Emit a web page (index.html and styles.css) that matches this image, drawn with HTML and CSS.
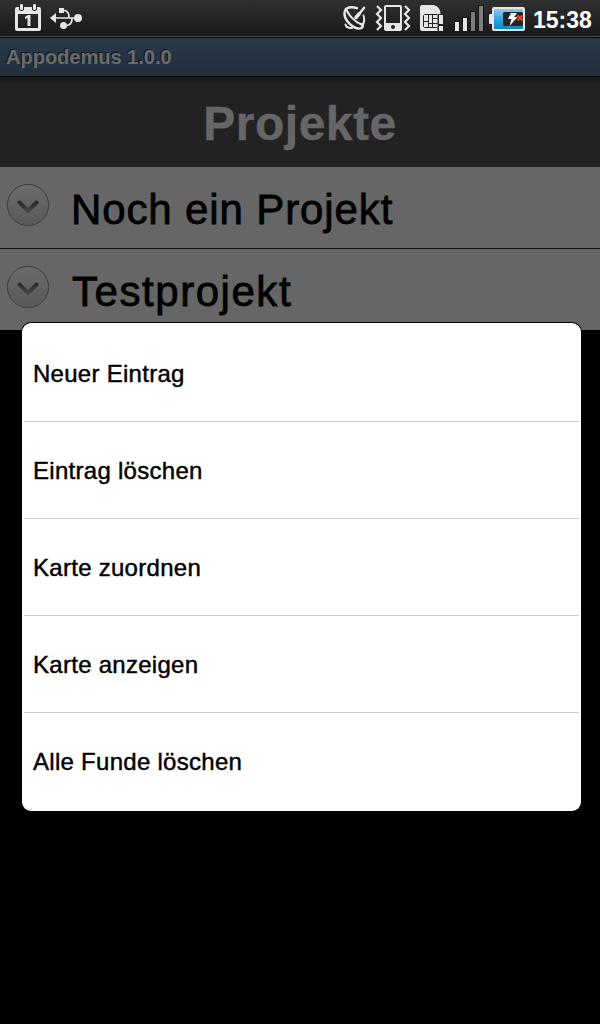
FILE: index.html
```html
<!DOCTYPE html>
<html lang="de">
<head>
<meta charset="utf-8">
<title>Appodemus</title>
<link rel="stylesheet" href="styles.css">
</head>
<body>
<div class="screen">
  <div class="status">
    <svg class="status-icons" width="100" height="36" viewBox="0 0 100 36">
      <g fill="#e6e6e6">
        <path fill-rule="evenodd" d="M17 7h22q2 0 2 2v20q0 2-2 2H17q-2 0-2-2V9q0-2 2-2zM18 14v14h20V14z"/>
        <rect x="19.500" y="3.500" width="4" height="7" rx="1.500" stroke="#222"/>
        <rect x="32.500" y="3.500" width="4" height="7" rx="1.500" stroke="#222"/>
        <path d="M25 17l3-2h2.500v11H27.500v-8l-2.500 1z"/>
        <path d="M50 18l6-5v10z"/>
        <rect x="59" y="8" width="5" height="5"/>
        <circle cx="63.500" cy="25.500" r="3.500"/>
        <circle cx="78" cy="18" r="4"/>
      </g>
      <path d="M55 18h22M63 10.500h2q4 1 4 7M64 25.500h3q5-1 5-7" fill="none" stroke="#e6e6e6" stroke-width="1.700"/>
    </svg>
    <svg class="status-icons" width="190" height="36" viewBox="340 0 190 36">
      <defs>
        <linearGradient id="power" x1="0" y1="0" x2="0" y2="1">
          <stop offset="0" stop-color="#8ccbea"/><stop offset=".5" stop-color="#2ba7dc"/><stop offset="1" stop-color="#0789c6"/>
        </linearGradient>
      </defs>
      <g fill="none" stroke="#e6e6e6" stroke-width="2.400" stroke-linecap="round">
        <path d="M357 8.200q-4-1.500-8-.7c-6 1.500-5.500 9-1.500 14 4 5 10 8.500 14 6.500q2-1.500 .5-4"/>
        <path d="M346.500 9c1 5 8 13 15 15.500M363.500 15.500c1.500 4 1 7-1.500 11M345.500 24.500q1 4 6.500 3.500" stroke-width="2"/>
        <path d="M356 17.500l3-3.500" stroke-width="3.500"/>
        <path d="M359 14l5-6" stroke-width="2.600"/>
      </g>
      <path d="M377 6l4 4-4 4 4 4-4 4 4 4-4 4M405 6l4 4-4 4 4 4-4 4 4 4-4 4" fill="none" stroke="#e6e6e6" stroke-width="2.200"/>
      <g fill="#e6e6e6">
        <path fill-rule="evenodd" d="M386 5h14q2 0 2 2v22q0 2-2 2h-14q-2 0-2-2V7q0-2 2-2zM386 7v16h14V7zM393 25a2 2 0 100 4 2 2 0 100-4z"/>
        <path d="M422 5h12q6 2 6.500 8v2H443v16h-21q-2 0-2-2V7q0-2 2-2z"/>
      </g>
      <g fill="none" stroke="#222" stroke-width="1">
        <path d="M437 14.500h-12.500l-1 1v11l1 1H437M428.500 14.500v13M432.500 14.500v13M424 21.500h4.500M432.500 18.500h5M428.500 23.500h9"/>
      </g>
      <path d="M437.500 14h6v17.500h-6z" fill="#222"/>
      <path d="M439 15h4v9h-4zM439 26h4v5h-4z" fill="#e6e6e6"/>
      <g stroke="#151515">
        <rect x="454.500" y="21.500" width="5" height="10" fill="#e6e6e6"/>
        <rect x="462.500" y="17.500" width="5" height="14" fill="#e6e6e6"/>
        <rect x="470.500" y="11.500" width="5" height="20" fill="#7d7d7d"/>
        <rect x="478.500" y="5.500" width="5" height="26" fill="#7d7d7d"/>
      </g>
      <path d="M494 7h29q2 0 2 2v20q0 2-2 2h-29q-2 0-2-2v-5h-2q-1 0-1-1v-8q0-1 1-1h2V9q0-2 2-2z" fill="#e6e6e6"/>
      <rect x="494" y="9" width="29" height="20" fill="url(#power)"/>
      <rect x="503" y="12" width="20" height="14" rx="1.500" fill="#252525"/>
      <path d="M511 13h6l-3 4h3.500l-8 9 2-7h-3.500z" fill="#fff"/>
      <path d="M517.500 15.500l5 5M522.500 15.500l-5 5" stroke="#e8401c" stroke-width="2.400"/>
    </svg>
    <span class="clock">15:38</span>
  </div>
  <div class="app-bar">Appodemus 1.0.0</div>
  <h1 class="heading">Projekte</h1>
  <div class="project">
    <svg class="chevron" width="44" height="44" viewBox="0 0 44 44">
      <defs>
        <linearGradient id="disc" x1="0" y1="0" x2="0" y2="1"><stop offset="0" stop-color="#6b6b6b"/><stop offset="1" stop-color="#595959"/></linearGradient>
        <linearGradient id="mark" x1="0" y1="0" x2="0" y2="1"><stop offset="0" stop-color="#2c2c2c"/><stop offset="1" stop-color="#464646"/></linearGradient>
      </defs>
      <circle cx="22" cy="22" r="20.600" fill="url(#disc)" stroke="#3c3c3c"/>
      <path d="M13.500 19.500l8.500 8.500 8.500-8.500" fill="none" stroke="url(#mark)" stroke-width="4" stroke-linecap="round"/>
    </svg>
    <span class="name">Noch ein Projekt</span>
  </div>
  <div class="project">
    <svg class="chevron" width="44" height="44" viewBox="0 0 44 44">
      <circle cx="22" cy="22" r="20.600" fill="url(#disc)" stroke="#3c3c3c"/>
      <path d="M13.500 19.500l8.500 8.500 8.500-8.500" fill="none" stroke="url(#mark)" stroke-width="4" stroke-linecap="round"/>
    </svg>
    <span class="name name-short">Testprojekt</span>
  </div>
  <div class="menu">
    <div class="item">Neuer Eintrag</div>
    <div class="item">Eintrag löschen</div>
    <div class="item">Karte zuordnen</div>
    <div class="item">Karte anzeigen</div>
    <div class="item">Alle Funde löschen</div>
  </div>
</div>
</body>
</html>
```
FILE: styles.css
```css
* { box-sizing: border-box; }
body {
  margin: 0;
  background: #000;
  font-family: "Liberation Sans", Arial, sans-serif;
}
.screen {
  position: relative;
  width: 600px;
  height: 1024px;
  overflow: hidden;
  background: #000;
}
.status {
  display: flex;
  justify-content: space-between;
  height: 38px;
  background: linear-gradient(#303030, #191919);
  border-bottom: 1px solid #050505;
  box-shadow: inset 0 -1px #484848;
}
.status-icons { display: block; }
.status-icons + .status-icons { margin-left: 240px; }
.clock {
  flex: 1;
  padding-left: 3px;
  color: #fff;
  font-size: 23px;
  font-weight: bold;
  line-height: 40px;
}
.app-bar {
  height: 39px;
  padding-left: 6px;
  background: linear-gradient(#293a4b, #202f3e);
  border-bottom: 1px solid #080b0d;
  color: #6b6b6b;
  font-size: 20px;
  font-weight: bold;
  line-height: 38px;
  text-shadow: -1px -1px #10171e;
}
.heading {
  height: 90px;
  margin: 0;
  background: linear-gradient(#181a18, #222 8px);
  color: #666;
  font-size: 48px;
  line-height: 93px;
  text-align: center;
  letter-spacing: 0.5px;
  -webkit-text-stroke: 0.4px #666;
}
.project {
  display: flex;
  align-items: flex-start;
  gap: 21px;
  height: 81px;
  padding: 16px 0 0 6px;
  background: #666;
}
.project + .project {
  height: 82px;
  border-top: 1px solid #151515;
}
.chevron { flex: none; }
.name {
  font-size: 42px;
  line-height: 54px;
  letter-spacing: 0.88px;
  -webkit-text-stroke: 0.8px #000;
}
.name-short { padding-left: 1px; letter-spacing: 1.55px; }
.menu {
  position: absolute;
  left: 22px;
  top: 323px;
  width: 559px;
  height: 488px;
  padding: 2px;
  background: #fff;
  border-radius: 9px;
  box-shadow: 0 0 0 1px #000;
}
.item {
  height: 97px;
  padding-left: 9px;
  border-bottom: 1px solid #ccc;
  font-size: 24px;
  line-height: 97px;
  letter-spacing: 0.28px;
  -webkit-text-stroke: 0.45px #000;
}
.item:last-child { border-bottom: 0; }
```
